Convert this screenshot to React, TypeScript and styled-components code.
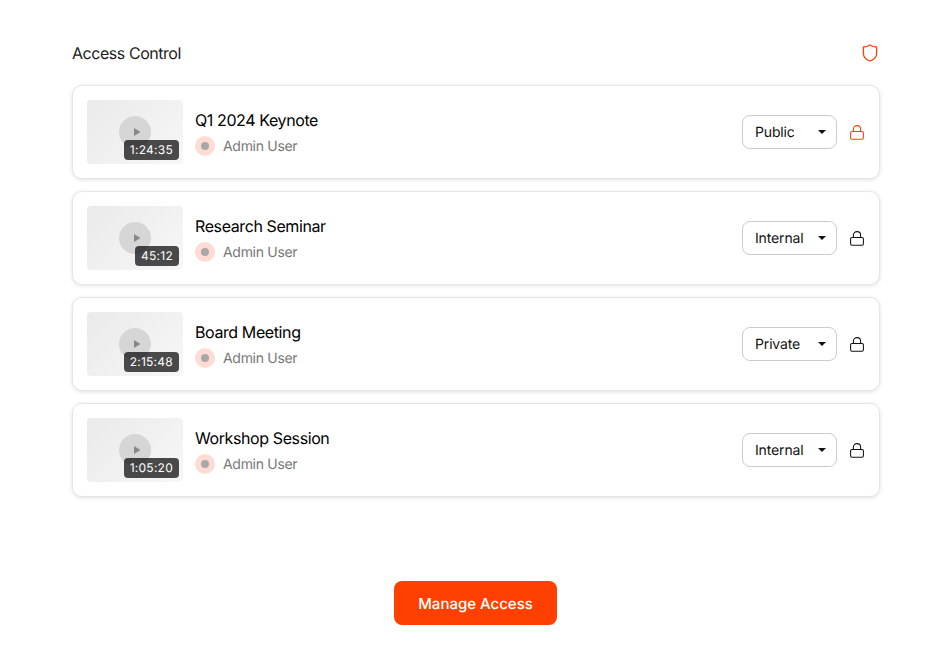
import React from "react";
import styled, { createGlobalStyle } from "styled-components";

const Global = createGlobalStyle`
  html, body { margin: 0; padding: 0; background: #fff; }
  body { font-family: Inter, "Liberation Sans", sans-serif; color: #000; -webkit-font-smoothing: antialiased; text-rendering: geometricPrecision; }
`;

const Page = styled.main`
  box-sizing: border-box;
  width: 940px;
  height: 660px;
  padding: 40px 60px 35px 72px;
  display: flex;
  flex-direction: column;
`;

const Header = styled.header`
  display: flex;
  align-items: center;
  justify-content: space-between;
  height: 27px;
  margin-bottom: 18px;
`;

const Title = styled.h1`
  margin: 0;
  font-size: 16px;
  line-height: 27px;
  font-weight: 400;
  letter-spacing: -0.45px;
  color: #222;
`;

const ShieldSlot = styled.span`
  display: flex;
  color: #ff4000;
  margin: -2px 2px 0 0;
`;

const List = styled.div`
  display: flex;
  flex-direction: column;
  gap: 12px;
`;

const Card = styled.article`
  box-sizing: border-box;
  height: 94px;
  display: flex;
  align-items: center;
  padding: 14px;
  border: 1px solid #e6e6e6;
  border-radius: 10px;
  background: #fff;
  box-shadow: 0 1px 4px rgba(0, 0, 0, 0.12);
`;

const Thumb = styled.div`
  position: relative;
  flex: none;
  width: 96px;
  height: 64px;
  border-radius: 4px;
  background: linear-gradient(135deg, #eaeaea, #f7f7f7);
  display: flex;
  align-items: center;
  justify-content: center;
`;

const PlayCircle = styled.div`
  width: 32px;
  height: 32px;
  border-radius: 50%;
  background: #d6d6d6;
  display: flex;
  align-items: center;
  justify-content: center;
`;

const Duration = styled.span`
  position: absolute;
  right: 4px;
  bottom: 4px;
  height: 20px;
  padding: 0 6px;
  border-radius: 4px;
  background: rgba(0, 0, 0, 0.7);
  color: #fff;
  font-size: 12px;
  line-height: 20px;
  letter-spacing: 0.25px;
`;

const Info = styled.div`
  flex: 1;
  margin-left: 12px;
  display: flex;
  flex-direction: column;
  gap: 4px;
`;

const VideoTitle = styled.div`
  font-size: 16px;
  line-height: 24px;
  letter-spacing: -0.4px;
  color: #000;
`;

const Meta = styled.div`
  display: flex;
  align-items: center;
  gap: 8px;
  height: 20px;
  font-size: 14px;
  letter-spacing: -0.3px;
  color: #777;
`;

const MetaName = styled.span`
  padding-top: 2px;
  line-height: 18px;
`;

const Avatar = styled.span`
  width: 20px;
  height: 20px;
  border-radius: 50%;
  background: #ffdcd3;
  display: flex;
  align-items: center;
  justify-content: center;
  &::after {
    content: "";
    width: 8px;
    height: 8px;
    border-radius: 50%;
    background: #a8a8a8;
  }
`;

const Select = styled.div`
  box-sizing: border-box;
  width: 95px;
  height: 34px;
  padding: 0 10px 0 12px;
  border: 1px solid #ccc;
  border-radius: 8px;
  display: flex;
  align-items: center;
  justify-content: space-between;
  font-size: 14px;
  letter-spacing: -0.15px;
  color: #111;
`;

const Caret = styled.span`
  width: 0;
  height: 0;
  border-left: 4px solid transparent;
  border-right: 4px solid transparent;
  border-top: 4px solid #111;
`;

const LockSlot = styled.span<{ $active: boolean }>`
  display: flex;
  margin: 0 1px 0 13px;
  color: ${(p) => (p.$active ? "#ff4000" : "#111")};
`;

const Footer = styled.div`
  margin: auto 1px 0 0;
  display: flex;
  justify-content: center;
`;

const Button = styled.button`
  width: 163px;
  height: 44px;
  border: 0;
  border-radius: 8px;
  background: #ff4000;
  color: #fff;
  font: 500 15px Inter, "Liberation Sans", sans-serif;
  text-rendering: geometricPrecision;
`;

const Shield = () => (
  <svg width="16" height="18" viewBox="0 0 16 18" fill="none" stroke="currentColor" strokeWidth="1.3" strokeLinejoin="round">
    <path d="M8 1 C9.8 2.4 11.8 3 14.6 3 V9.5 C14.6 13.2 11.5 15.8 8 17 C4.5 15.8 1.4 13.2 1.4 9.5 V3 C4.2 3 6.2 2.4 8 1 Z" />
  </svg>
);

const Lock = () => (
  <svg width="14" height="15" viewBox="0 0 14 15" fill="none" stroke="currentColor" strokeWidth="1.05">
    <rect x="0.6" y="6.4" width="12.8" height="7.8" rx="1.4" />
    <path d="M3.4 6.4 V4 a3.6 3.4 0 0 1 7.2 0 V6.4" />
  </svg>
);

const Play = () => (
  <svg width="12" height="8" viewBox="0 0 12 8" fill="#888">
    <path d="M5 0 L11.5 4 L5 8 Z" />
  </svg>
);

const rows = [
  { title: "Q1 2024 Keynote", time: "1:24:35", access: "Public", active: true },
  { title: "Research Seminar", time: "45:12", access: "Internal", active: false },
  { title: "Board Meeting", time: "2:15:48", access: "Private", active: false },
  { title: "Workshop Session", time: "1:05:20", access: "Internal", active: false },
];

export default function App() {
  return (
    <>
      <Global />
      <Page>
        <Header>
          <Title>Access Control</Title>
          <ShieldSlot><Shield /></ShieldSlot>
        </Header>
        <List>
          {rows.map((r) => (
            <Card key={r.title}>
              <Thumb>
                <PlayCircle><Play /></PlayCircle>
                <Duration>{r.time}</Duration>
              </Thumb>
              <Info>
                <VideoTitle>{r.title}</VideoTitle>
                <Meta><Avatar /><MetaName>Admin User</MetaName></Meta>
              </Info>
              <Select>{r.access}<Caret /></Select>
              <LockSlot $active={r.active}><Lock /></LockSlot>
            </Card>
          ))}
        </List>
        <Footer><Button>Manage Access</Button></Footer>
      </Page>
    </>
  );
}
